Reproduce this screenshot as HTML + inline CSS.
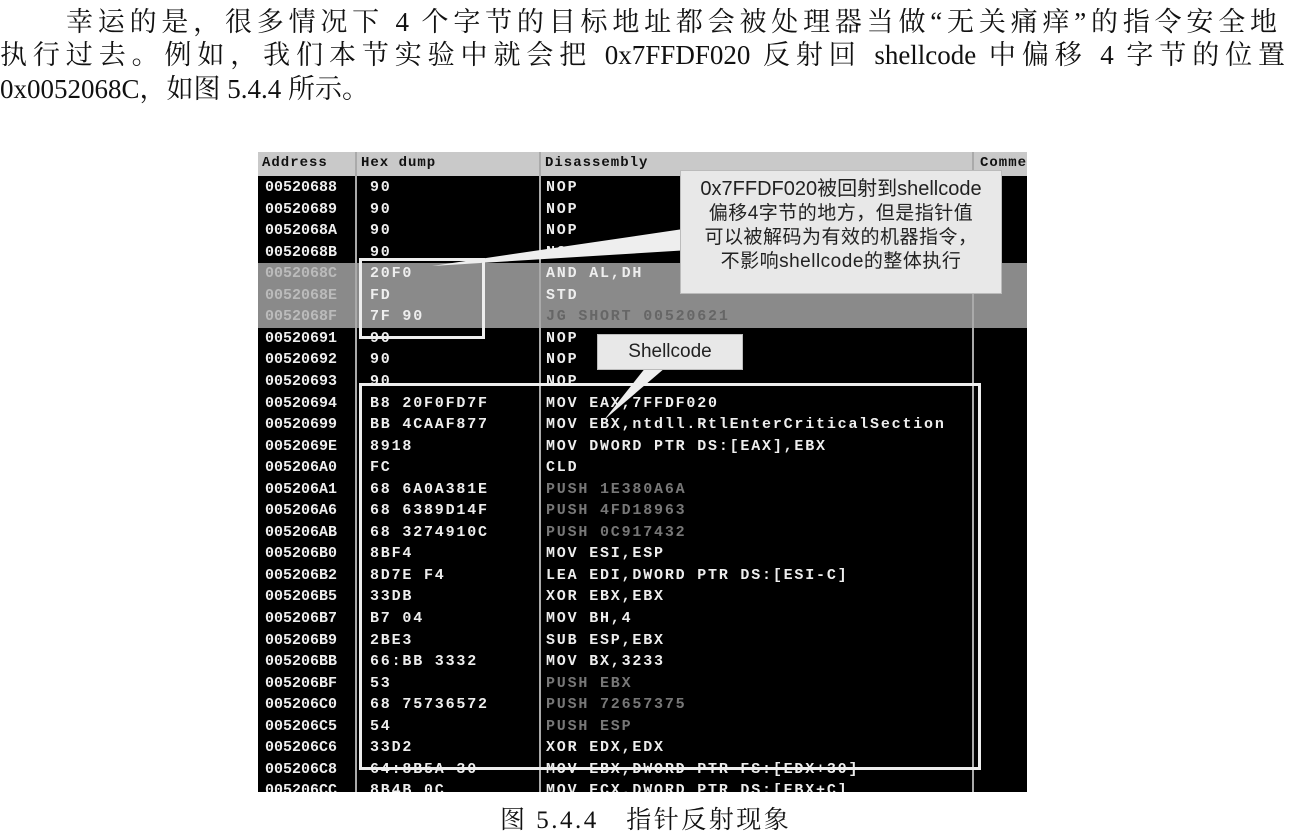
<!DOCTYPE html>
<html><head><meta charset="utf-8"><style>
body{margin:0;width:1294px;height:836px;background:#fff;position:relative;overflow:hidden;font-family:"Liberation Serif","Noto Serif CJK SC",serif;}
.t{position:absolute;font-size:27px;white-space:nowrap;color:#111;line-height:32px}
.j{text-align:justify;text-align-last:justify;white-space:normal}
#img{position:absolute;left:258px;top:152px;width:769px;height:640px;background:#000;overflow:hidden}
.hd{position:absolute;left:0;top:0;width:769px;height:24px;background:#c9c9c9}
.hd span{position:absolute;top:3px;font:bold 14px "Liberation Mono",monospace;color:#111;letter-spacing:1px}
.vl{position:absolute;top:0;width:2px;height:640px;background:#aaa}
.row{position:absolute;left:0;width:769px;height:21.5px;font:bold 15px "Liberation Mono",monospace;color:#eee}
.row span{position:absolute;top:2px;letter-spacing:1.8px}
.row span.a{letter-spacing:0}
.sel{background:#8a8a8a}
.sel .a{color:#bbb}
.g{color:#777}
.box{position:absolute;border:3px solid #eee}
.call{position:absolute;background:#e8e8e8;border:1px solid #bbb;font-family:"Liberation Sans","Noto Sans CJK SC",sans-serif;color:#222;text-align:center}
</style></head><body>
<div class="t j" style="left:66px;top:6px;width:1212px;letter-spacing:1px">幸运的是，很多情况下 4 个字节的目标地址都会被处理器当做“无关痛痒”的指令安全地</div>
<div class="t j" style="left:0;top:39px;width:1285px">执行过去。例如，我们本节实验中就会把 0x7FFDF020 反射回 shellcode 中偏移 4 字节的位置</div>
<div class="t" style="left:0;top:73px">0x0052068C，如图 5.4.4 所示。</div>
<div id="img">
<div class="hd"><span style="left:4px">Address</span><span style="left:103px">Hex dump</span><span style="left:287px">Disassembly</span><span style="left:722px">Comme</span></div>
<div id="rows"></div>
<div class="vl" style="left:97px"></div><div class="vl" style="left:281px"></div><div class="vl" style="left:714px"></div>
</div>
<script>
var R=[["00520688","90","NOP"],["00520689","90","NOP"],["0052068A","90","NOP"],["0052068B","90","NOP"],["0052068C","20F0","AND AL,DH",1],["0052068E","FD","STD",1],["0052068F","7F 90","JG SHORT 00520621",2],["00520691","90","NOP"],["00520692","90","NOP"],["00520693","90","NOP"],["00520694","B8 20F0FD7F","MOV EAX,7FFDF020"],["00520699","BB 4CAAF877","MOV EBX,ntdll.RtlEnterCriticalSection"],["0052069E","8918","MOV DWORD PTR DS:[EAX],EBX"],["005206A0","FC","CLD"],["005206A1","68 6A0A381E","PUSH 1E380A6A",3],["005206A6","68 6389D14F","PUSH 4FD18963",3],["005206AB","68 3274910C","PUSH 0C917432",3],["005206B0","8BF4","MOV ESI,ESP"],["005206B2","8D7E F4","LEA EDI,DWORD PTR DS:[ESI-C]"],["005206B5","33DB","XOR EBX,EBX"],["005206B7","B7 04","MOV BH,4"],["005206B9","2BE3","SUB ESP,EBX"],["005206BB","66:BB 3332","MOV BX,3233"],["005206BF","53","PUSH EBX",3],["005206C0","68 75736572","PUSH 72657375",3],["005206C5","54","PUSH ESP",3],["005206C6","33D2","XOR EDX,EDX"],["005206C8","64:8B5A 30","MOV EBX,DWORD PTR FS:[EDX+30]"],["005206CC","8B4B 0C","MOV ECX,DWORD PTR DS:[EBX+C]"]];
var h="";R.forEach(function(r,i){var top=25+i*21.55;var s=(r[3]==1||r[3]==2);
h+='<div class="row'+(s?' sel':'')+'" style="top:'+top+'px"><span class="a" style="left:7px">'+r[0]+'</span><span style="left:112px">'+r[1]+'</span><span class="'+(r[3]>=2?'g':'')+'" style="left:288px;'+(r[3]==2?'color:#666':'')+'">'+r[2]+'</span></div>';});
document.getElementById('rows').innerHTML=h;
</script>
<svg style="position:absolute;left:0;top:0" width="1294" height="836">
<polygon points="432,266 690,228 690,250" fill="#eee"/>
<polygon points="604,420 650,362 672,362" fill="#eee"/>
</svg>
<div class="box" style="left:359px;top:258px;width:120px;height:75px"></div>
<div class="box" style="left:359px;top:383px;width:616px;height:381px"></div>
<div class="call" style="left:680px;top:170px;width:322px;height:124px;font-size:19px;line-height:24px;padding-top:6px;box-sizing:border-box;letter-spacing:0.5px"><span style="font-size:20px;letter-spacing:0">0x7FFDF020被回射到shellcode</span><br>偏移4字节的地方，但是指针值<br>可以被解码为有效的机器指令，<br>不影响shellcode的整体执行</div>
<div class="call" style="left:597px;top:334px;width:144px;height:34px;font-size:19px;line-height:34px">Shellcode</div>
<div class="t" style="left:500px;top:805px;font-size:25px;letter-spacing:2.5px">图 5.4.4　指针反射现象</div>
</body></html>
